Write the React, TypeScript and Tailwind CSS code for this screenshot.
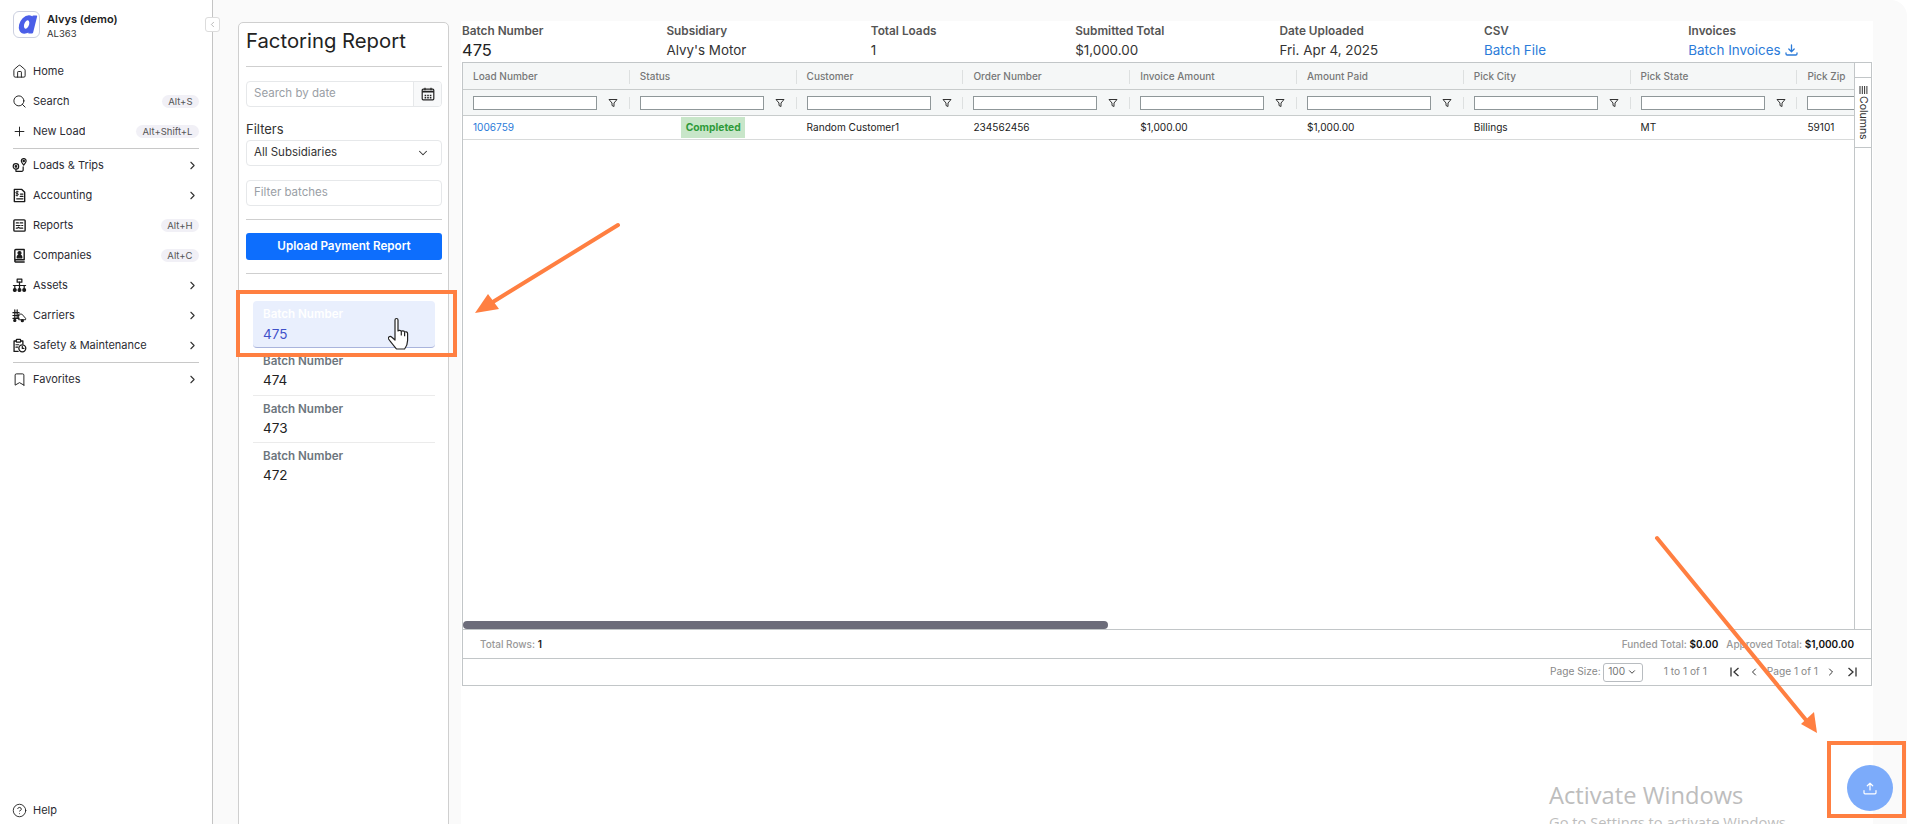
import React from "react";
import { House, Search, Plus, ChevronRight, ChevronLeft, ChevronDown, Bookmark, CircleHelp } from "lucide-react";

const sw = { fill: "none", stroke: "currentColor", strokeWidth: 1.3, strokeLinecap: "round", strokeLinejoin: "round" } as const;
const Ico = ({ children }: { children: React.ReactNode }) => (
  <svg width="15" height="15" viewBox="0 0 16 16" {...sw}>{children}</svg>
);

const LoadsIcon = () => (
  <Ico>
    <circle cx="4.2" cy="9" r="2.9" />
    <circle cx="4.2" cy="9" r="0.8" fill="currentColor" />
    <path d="M12.5 7.5c-1.6-1.8-2.6-3-2.6-4.3a2.6 2.6 0 0 1 5.2 0c0 1.3-1 2.5-2.6 4.3z" />
    <circle cx="12.5" cy="3.2" r="0.7" fill="currentColor" />
    <path d="M4.2 12v2.2h6.3a1.4 1.4 0 0 0 1.4-1.4V9.5" />
  </Ico>
);
const AccountingIcon = () => (
  <Ico>
    <path d="M2.5 1.5h8l3 3v10h-11z" strokeWidth="1.5" />
    <path d="M8.8 9h2.8M5 11.5h6.6M9 6.5h2.6" />
    <path d="M6.6 4H5.1a.9.9 0 0 0 0 1.9h.7a.9.9 0 0 1 0 1.9H4.3M5.4 3.2v5.4" strokeWidth="1" />
  </Ico>
);
const ReportsIcon = () => (
  <Ico>
    <rect x="2" y="2" width="12" height="12" rx="1" strokeWidth="1.5" />
    <path d="M4.6 5.2h2.2M8.6 5.2h2.8M4.6 8h4M10.4 8h1M4.6 10.8h1.2l1.2-1 1.2 1h3.2" />
  </Ico>
);
const CompaniesIcon = () => (
  <Ico>
    <path d="M3 13V2.6a1 1 0 0 1 1-1h9v11H4.2a1.2 1.2 0 0 0 0 2.4H13" strokeWidth="1.5" />
    <circle cx="8" cy="5.4" r="1.6" fill="currentColor" />
    <path d="M5.5 10.5c0-2 1.1-2.8 2.5-2.8s2.5.8 2.5 2.8z" fill="currentColor" />
  </Ico>
);
const AssetsIcon = () => (
  <Ico>
    <rect x="5.5" y="1.2" width="5" height="3.2" />
    <path d="M8 4.4V11M3 11V8h10v3M1.5 8h13" />
    <circle cx="3" cy="12.8" r="1.5" fill="currentColor" />
    <circle cx="8" cy="12.8" r="1.5" fill="currentColor" />
    <circle cx="13" cy="12.8" r="1.5" fill="currentColor" />
  </Ico>
);
const CarriersIcon = () => (
  <Ico>
    <path d="M3 2v9M5.5 2v9M1 5h6.5M1 8h6.5M1 11h6.5" />
    <path d="M7.5 6.5h3l4 4.5v1.5H7.5z" strokeWidth="1" />
    <circle cx="3" cy="13.3" r="1.1" fill="currentColor" />
    <circle cx="11" cy="13.5" r="1.1" fill="currentColor" />
  </Ico>
);
const SafetyIcon = () => (
  <Ico>
    <path d="M6.5 14.3H2.2V3.2h2.2M9.3 3.2h2.3v3" strokeWidth="1.4" />
    <rect x="4.6" y="1.4" width="4.6" height="3" rx="0.6" />
    <path d="M4.2 7.2h3M4.2 9.8h1.8" />
    <circle cx="11" cy="11" r="3.7" strokeWidth="1.4" />
    <path d="M11 9v2.1h1.7" />
  </Ico>
);

const Kbd = ({ children }: { children: React.ReactNode }) => (
  <span className="ml-auto rounded-full bg-[#f1f0f6] px-[6.5px] text-[9.5px] leading-[13px] text-[#555]">{children}</span>
);
const Chev = () => <ChevronRight size={13} strokeWidth={2} className="ml-auto text-[#333]" />;

const NavRow = ({ icon, label, right }: { icon: React.ReactNode; label: string; right?: React.ReactNode }) => (
  <div className="flex h-[30px] items-center pl-[12px] pr-[13px] pt-[2px] text-[11px] text-[#2b2b33]">
    <span className="flex w-[21px] shrink-0 items-center text-[#1a1a1a]">{icon}</span>
    <span className="truncate">{label}</span>
    {right}
  </div>
);

const Funnel = () => (
  <svg width="10" height="10" viewBox="0 0 10 10" fill="none" stroke="#333" strokeWidth="1" strokeLinejoin="round">
    <path d="M1 1.5h8L6 5v3.5L4 7.5V5z" />
  </svg>
);

const columns = ["Load Number", "Status", "Customer", "Order Number", "Invoice Amount", "Amount Paid", "Pick City", "Pick State", "Pick Zip"];
const stats = [
  { label: "Batch Number", value: "475", cls: "text-[16.5px] text-[#222]" },
  { label: "Subsidiary", value: "Alvy's Motor", cls: "text-[13.4px] text-[#333]" },
  { label: "Total Loads", value: "1", cls: "text-[13.4px] text-[#333]" },
  { label: "Submitted Total", value: "$1,000.00", cls: "text-[13.4px] text-[#333]" },
  { label: "Date Uploaded", value: "Fri. Apr 4, 2025", cls: "text-[13.4px] text-[#333]" },
  { label: "CSV", value: "Batch File", cls: "text-[13.4px] text-[#2b7bd9]" },
];
const Cell = ({ children }: { children: React.ReactNode }) => (
  <div className="flex w-[166.8px] shrink-0 items-center pl-[10px] pt-px text-[10.1px] text-[#222]">{children}</div>
);

export default function App() {
  return (
    <div className="relative flex h-[824px] w-[1914px] overflow-hidden bg-white font-['Inter','Liberation_Sans',sans-serif]">
      {/* sidebar */}
      <aside className="relative flex h-full w-[213px] shrink-0 flex-col border-r border-[#c4c4c4] bg-white">
        <div className="flex h-[55px] items-start pl-[13px] pt-[11px]">
          <div className="flex h-[27px] w-[27px] items-center justify-center rounded-[6px] border border-[#ccd0e0] bg-white">
            <svg width="23" height="19" viewBox="0 0 23 19">
              <g transform="skewX(-14) translate(5.5 0)">
                <ellipse cx="8.5" cy="9.5" rx="5" ry="6.7" fill="none" stroke="#4a5ee8" strokeWidth="5" />
                <rect x="12" y="0.5" width="5" height="18" rx="1" fill="#4a5ee8" />
              </g>
            </svg>
          </div>
          <div className="ml-[7px] pt-[1px]">
            <div className="text-[11px] font-semibold leading-[14px] text-[#1c1c1c]">Alvys (demo)</div>
            <div className="mt-[1px] text-[9.5px] leading-[13px] text-[#333]">AL363</div>
          </div>
        </div>
        <NavRow icon={<House size={15} strokeWidth={1.5} />} label="Home" />
        <NavRow icon={<Search size={15} strokeWidth={1.5} />} label="Search" right={<Kbd>Alt+S</Kbd>} />
        <NavRow icon={<Plus size={15} strokeWidth={1.5} />} label="New Load" right={<Kbd>Alt+Shift+L</Kbd>} />
        <div className="mx-[13px] mt-[3px] h-px bg-[#c8c8c8]" />
        <NavRow icon={<LoadsIcon />} label="Loads & Trips" right={<Chev />} />
        <NavRow icon={<AccountingIcon />} label="Accounting" right={<Chev />} />
        <NavRow icon={<ReportsIcon />} label="Reports" right={<Kbd>Alt+H</Kbd>} />
        <NavRow icon={<CompaniesIcon />} label="Companies" right={<Kbd>Alt+C</Kbd>} />
        <NavRow icon={<AssetsIcon />} label="Assets" right={<Chev />} />
        <NavRow icon={<CarriersIcon />} label="Carriers" right={<Chev />} />
        <NavRow icon={<SafetyIcon />} label="Safety & Maintenance" right={<Chev />} />
        <div className="mx-[13px] mt-[3px] h-px bg-[#c8c8c8]" />
        <NavRow icon={<Bookmark size={15} strokeWidth={1.5} />} label="Favorites" right={<Chev />} />
        <div className="mt-auto">
          <NavRow icon={<CircleHelp size={15} strokeWidth={1.4} />} label="Help" />
        </div>
        <div className="absolute left-[205px] top-[17px] z-10 flex h-[15px] w-[15px] items-center justify-center rounded-[3px] border border-[#dcdcdc] bg-white">
          <ChevronLeft size={9} strokeWidth={1.5} className="text-[#888]" />
        </div>
      </aside>

      {/* main */}
      <main className="flex h-full w-[1694px] shrink-0 rounded-tr-[16px] bg-[#fafafa] pl-[25px] pt-[21px]">
        {/* batches panel */}
        <section className="mt-px h-[900px] w-[211px] shrink-0 rounded-t-[5px] border border-[#cfcfcf] bg-white pl-[7px] pr-[6px]">
          <div className="flex h-[43px] items-center pb-[7px] text-[20.3px] leading-none text-[#222]">Factoring Report</div>
          <div className="h-px bg-[#cfcfcf]" />
          <div className="mt-[14px] flex h-[26px] overflow-hidden rounded-[4px] border border-[#e6e8ea]">
            <div className="flex flex-1 items-center pl-[7px] text-[11.5px] text-[#9aa0a6]">Search by date</div>
            <div className="flex w-[28px] items-center justify-center border-l border-[#e6e8ea] bg-[#f8f9fa]">
              <svg width="14" height="14" viewBox="0 0 14 14" fill="none" stroke="#222" strokeWidth="1.2">
                <rect x="1.2" y="2.2" width="11.6" height="10.6" rx="1" />
                <path d="M1.2 4.6h11.6" strokeWidth="1.8" />
                <path d="M4 .8v2.4M10 .8v2.4" />
                <path d="M3.6 8.6h1.6M6.2 8.6h1.6M8.8 8.6h1.6M3.6 10.8h1.6M6.2 10.8h1.6M8.8 10.8h1.6" strokeWidth="1.5" />
              </svg>
            </div>
          </div>
          <div className="mt-[15px] mb-[4px] h-[14px] text-[13px] leading-[14px] text-[#333]">Filters</div>
          <div className="flex h-[26px] items-center justify-between rounded-[4px] border border-[#e6e8ea] pl-[7px] pr-[11px] text-[11.5px] text-[#333]">
            <span>All Subsidiaries</span>
            <ChevronDown size={14} strokeWidth={1.8} className="text-[#333]" />
          </div>
          <div className="mt-[14px] flex h-[26px] items-center rounded-[4px] border border-[#e6e8ea] pl-[7px] text-[11.5px] text-[#9aa0a6]">Filter batches</div>
          <div className="mt-[13px] h-px bg-[#cfcfcf]" />
          <div className="mt-[13px] flex h-[27px] items-center justify-center rounded-[3px] bg-[#0d6efd] text-[11.7px] font-semibold text-white">Upload Payment Report</div>
          <div className="mt-[13px] h-px bg-[#cfcfcf]" />
          <div className="mx-[7px] mt-[27px]">
            <div className="h-[47px] rounded-[4px] border-b border-[#a9b4dc] bg-[#e9effd] pl-[10px] pt-[6px]">
              <div className="text-[11.6px] font-semibold leading-[14px] text-white">Batch Number</div>
              <div className="mt-[5px] text-[13.5px] leading-[16px] text-[#3f51c9]">475</div>
            </div>
            {["474", "473", "472"].map((n, i) => (
              <div key={n} className={`h-[47.5px] pl-[10px] pt-[6px] ${i < 2 ? "border-b border-[#ebebeb]" : ""}`}>
                <div className="text-[11.6px] font-semibold leading-[14px] text-[#6c757d]">Batch Number</div>
                <div className="mt-[4px] text-[13.5px] leading-[16px] text-[#222]">{n}</div>
              </div>
            ))}
          </div>
        </section>

        {/* content */}
        <section className="ml-[12px] h-[900px] w-[1412px] shrink-0 overflow-hidden bg-white">
          <div className="flex h-[41px] pl-px">
            {stats.map((s) => (
              <div key={s.label} className="w-[204.4px] shrink-0">
                <div className="mt-[3px] text-[11.8px] font-semibold leading-[14px] text-[#555]">{s.label}</div>
                <div className={`mt-[2px] leading-[20px] ${s.cls}`}>{s.value}</div>
              </div>
            ))}
            <div className="w-[186px] shrink-0">
              <div className="mt-[3px] text-[11.8px] font-semibold leading-[14px] text-[#555]">Invoices</div>
              <div className="mt-[2px] flex items-center gap-[4px] text-[13.4px] leading-[20px] text-[#2b7bd9]">
                Batch Invoices
                <svg width="13" height="12" viewBox="0 0 13 12" fill="none" stroke="currentColor" strokeWidth="1.3" strokeLinecap="round" strokeLinejoin="round">
                  <path d="M6.5 1v6.5M3.8 5l2.7 2.7L9.2 5M1 9v.8c0 .7.5 1.2 1.2 1.2h8.6c.7 0 1.2-.5 1.2-1.2V9" />
                </svg>
              </div>
            </div>
          </div>

          {/* grid */}
          <div className="ml-px flex h-[624px] w-[1410px] flex-col border border-[#c2c6c8]">
            <div className="flex h-[566px] shrink-0">
              <div className="flex min-w-0 flex-1 flex-col overflow-hidden">
                <div className="flex h-[27px] shrink-0 border-b border-[#c8cccc] bg-[#f5f7f7] pt-px">
                  {columns.map((c, i) => (
                    <div key={c} className="flex w-[166.8px] shrink-0 items-center pl-[10px] text-[10px] font-medium text-[#777]">
                      <span>{c}</span>
                      {i < 8 && <span className="ml-auto h-[14px] w-px bg-[#dde0e0]" />}
                    </div>
                  ))}
                </div>
                <div className="flex h-[26px] shrink-0 border-b border-[#c8cccc] bg-[#f5f7f7]">
                  {columns.map((c, i) => (
                    <div key={c} className="flex w-[166.8px] shrink-0 items-center pl-[10px]">
                      <span className="h-[14px] w-[124px] border border-[#8f9799] bg-white" />
                      {i < 8 && <span className="ml-[11px]"><Funnel /></span>}
                      {i < 8 && <span className="ml-auto h-[12px] w-px bg-[#dde0e0]" />}
                    </div>
                  ))}
                </div>
                <div className="flex h-[24px] shrink-0 border-b border-[#d8dada]">
                  <Cell><span className="text-[#2b7bd9]">1006759</span></Cell>
                  <div className="flex w-[166.8px] shrink-0 items-center justify-center">
                    <span className="flex h-[21px] w-[64px] items-center justify-center bg-[#c8e6c9] pt-px text-[10.3px] font-bold text-[#2e9a3a]">Completed</span>
                  </div>
                  <Cell>Random Customer1</Cell>
                  <Cell>234562456</Cell>
                  <Cell>$1,000.00</Cell>
                  <Cell>$1,000.00</Cell>
                  <Cell>Billings</Cell>
                  <Cell>MT</Cell>
                  <Cell>59101</Cell>
                </div>
                <div className="mt-auto h-[8px] w-full shrink-0">
                  <div className="h-[8px] w-[645px] rounded-full bg-[#6c6c7a]" />
                </div>
              </div>
              <div className="flex w-[17px] shrink-0 flex-col border-l border-[#c2c6c8] bg-white">
                <div className="mt-[14px] flex h-[71px] flex-col items-center border-y border-[#c2c6c8] pt-[8px]">
                  <svg width="9" height="8" viewBox="0 0 9 8" stroke="#333" strokeWidth="1"><path d="M1 0v8M3.3 0v8M5.6 0v8M7.9 0v8" /></svg>
                  <span className="mt-[2px] text-[10.5px] leading-[14px] text-[#333] [writing-mode:vertical-rl]">Columns</span>
                </div>
              </div>
            </div>
            <div className="flex h-[29px] shrink-0 items-center border-t border-[#c2c6c8] pl-[17px] pr-[17px] text-[10px] font-medium text-[#999]">
              <span>Total Rows: <span className="font-semibold text-[#222]">1</span></span>
              <span className="ml-auto text-[10px]">Funded Total: <span className="font-semibold text-[#111]">$0.00</span></span>
              <span className="ml-[8px] text-[10px]">Approved Total: <span className="font-semibold text-[#111]">$1,000.00</span></span>
            </div>
            <div className="flex flex-1 items-center justify-end border-t border-[#c2c6c8] pr-[14px] text-[10.2px] text-[#888]">
              <span>Page Size:</span>
              <span className="ml-[2px] flex h-[19px] w-[40px] items-center justify-center gap-[2px] rounded-[3px] border border-[#b8bcc0] text-[#777]">100<ChevronDown size={10} strokeWidth={2.2} className="text-[#333]" /></span>
              <span className="ml-[21px]">1 to 1 of 1</span>
              <FirstPage />
              <ChevronLeft size={12} strokeWidth={2} className="ml-[8px] text-[#333]" />
              <span className="ml-[7px]">Page 1 of 1</span>
              <ChevronRight size={12} strokeWidth={2} className="ml-[7px] text-[#333]" />
              <LastPage />
            </div>
          </div>
        </section>
      </main>

      {/* annotations over the page */}
      <div className="absolute left-[236px] top-[290px] h-[67px] w-[221px] border-[4px] border-[#ff7f41]" />
      <div className="absolute left-[1827px] top-[741px] h-[77px] w-[79px] border-[4px] border-[#ff7f41]" />
      <svg className="pointer-events-none absolute left-0 top-0" width="1914" height="824" viewBox="0 0 1914 824" fill="none">
        <path d="M618 225L488 305" stroke="#ff7f41" strokeWidth="4" strokeLinecap="round" />
        <path d="M475 313L488 294L499 309z" fill="#ff7f41" />
        <path d="M1657 538L1806 720" stroke="#ff7f41" strokeWidth="4" strokeLinecap="round" />
        <path d="M1817 733L1801 724L1814 712z" fill="#ff7f41" />
      </svg>
      <svg className="absolute left-[388px] top-[317px]" width="26" height="33" viewBox="0 0 26 33" fill="#fff" stroke="#222" strokeWidth="1.2" strokeLinejoin="round">
        <path d="M7 3c0-2 3-2 3 0v11c.5-1 3-1 3.3.5.5-1 3-1 3.3.7.7-.8 3-.6 3 1.3v7c0 4-1.5 6.5-3 8.5h-8c-2-2.5-6-7-8-10-1-2 1.5-3.5 3-2l3.4 3z" />
        <path d="M13.3 14.500v4M16.6 15.200v4" />
      </svg>
      <div className="absolute left-[1847px] top-[765px] flex h-[46px] w-[46px] items-center justify-center rounded-full bg-[#7cabfa]">
        <svg width="14" height="13" viewBox="0 0 14 13" fill="none" stroke="#fff" strokeWidth="1.2" strokeLinecap="round" strokeLinejoin="round">
          <path d="M7 8V1.2M4.3 3.8L7 1.2l2.7 2.6M1 8.5v2.3c0 .6.4 1 1 1h10c.6 0 1-.4 1-1V8.5" />
        </svg>
      </div>
      <div className="pointer-events-none absolute left-[1549px] top-[778px] font-['Open_Sans',sans-serif] text-[#bdbdbd]">
        <div className="text-[23.7px] leading-[34px]">Activate Windows</div>
        <div className="text-[14.7px] leading-[20px]">Go to Settings to activate Windows.</div>
      </div>
    </div>
  );
}

function FirstPage() {
  return (
    <svg className="ml-[23px]" width="10" height="10" viewBox="0 0 10 10" fill="none" stroke="#333" strokeWidth="1.3">
      <path d="M1 .5v9M8.5 1L4 5l4.500 4" />
    </svg>
  );
}
function LastPage() {
  return (
    <svg className="ml-[10px]" width="10" height="10" viewBox="0 0 10 10" fill="none" stroke="#333" strokeWidth="1.3">
      <path d="M9 .5v9M1.5 1L6 5 1.5 9" />
    </svg>
  );
}
